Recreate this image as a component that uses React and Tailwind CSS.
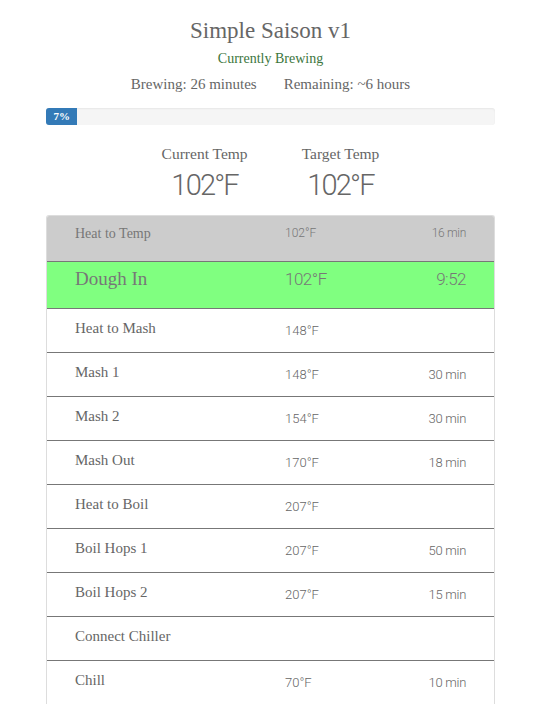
const serif = { fontFamily: '"Liberation Serif", Georgia, serif' }

const steps = [
  { name: 'Heat to Mash', temp: '148°F', time: '' },
  { name: 'Mash 1', temp: '148°F', time: '30 min' },
  { name: 'Mash 2', temp: '154°F', time: '30 min' },
  { name: 'Mash Out', temp: '170°F', time: '18 min' },
  { name: 'Heat to Boil', temp: '207°F', time: '' },
  { name: 'Boil Hops 1', temp: '207°F', time: '50 min' },
  { name: 'Boil Hops 2', temp: '207°F', time: '15 min' },
  { name: 'Connect Chiller', temp: '', time: '' },
  { name: 'Chill', temp: '70°F', time: '10 min' },
]

function StepRow({ name, temp, time }) {
  return (
    <div className="grid grid-cols-[210px_1fr_auto] items-center h-[44px] px-[28px] border-t border-[#777] text-[#666]">
      <span className="text-[15px] -mt-[4px]" style={serif}>{name}</span>
      <span className="text-[13px] font-['Roboto',sans-serif] font-light">{temp}</span>
      <span className="text-[13px] tracking-[-0.3px] font-['Roboto',sans-serif] font-light">{time}</span>
    </div>
  )
}

export default function App() {
  return (
    <div className="bg-white min-h-[705px] text-[#666]">
      <div className="ml-[46px] w-[449px] pt-[16px]">
        <div className="text-center">
          <h1 className="text-[23px] leading-[30px]" style={serif}>Simple Saison v1</h1>
          <div className="text-[14px] leading-[18px] mt-[4px] text-[#3c763d]" style={serif}>Currently Brewing</div>
          <div className="flex justify-center gap-[27px] text-[15px] leading-[20px] mt-[6px]" style={serif}>
            <span>Brewing: 26 minutes</span>
            <span>Remaining: ~6 hours</span>
          </div>
        </div>

        <div className="mt-[14px] h-[17px] bg-[#f5f5f5] rounded-[3px] overflow-hidden shadow-[inset_0_1px_2px_rgba(0,0,0,0.06)]">
          <div className="h-full w-[7%] bg-[#337ab7] text-white text-[11px] font-bold leading-[17px] text-center" style={serif}>7%</div>
        </div>

        <div className="flex justify-center gap-[54px] mt-[19px]">
          <div className="flex flex-col items-center">
            <span className="text-[15.5px] leading-[20px]" style={serif}>Current Temp</span>
            <span className="text-[29px] leading-[34px] mt-[4px] tracking-[-1.8px] font-['Roboto',sans-serif] font-light">102°F</span>
          </div>
          <div className="flex flex-col items-center">
            <span className="text-[15.5px] leading-[20px]" style={serif}>Target Temp</span>
            <span className="text-[29px] leading-[34px] mt-[4px] tracking-[-1.8px] font-['Roboto',sans-serif] font-light">102°F</span>
          </div>
        </div>

        <div className="mt-[13px] border border-[#ddd] border-b-0 rounded-t-[3px] overflow-hidden">
          <div className="grid grid-cols-[210px_1fr_auto] items-center h-[45px] px-[28px] pb-[11px] bg-[#ccc] text-[#777]">
            <span className="text-[14px]" style={serif}>Heat to Temp</span>
            <span className="text-[12px] font-['Roboto',sans-serif] font-light">102°F</span>
            <span className="text-[12px] tracking-[-0.3px] font-['Roboto',sans-serif] font-light">16 min</span>
          </div>
          <div className="grid grid-cols-[210px_1fr_auto] items-center h-[47px] px-[28px] pb-[10px] bg-[#80ff80] border-t border-[#777] text-[#777]">
            <span className="text-[19px] -mt-[1px]" style={serif}>Dough In</span>
            <span className="text-[17px] tracking-[-0.5px] font-['Roboto',sans-serif] font-light">102°F</span>
            <span className="text-[17px] tracking-[-0.5px] font-['Roboto',sans-serif] font-light">9:52</span>
          </div>
          {steps.map(s => (
            <StepRow key={s.name} {...s} />
          ))}
        </div>
      </div>
    </div>
  )
}
